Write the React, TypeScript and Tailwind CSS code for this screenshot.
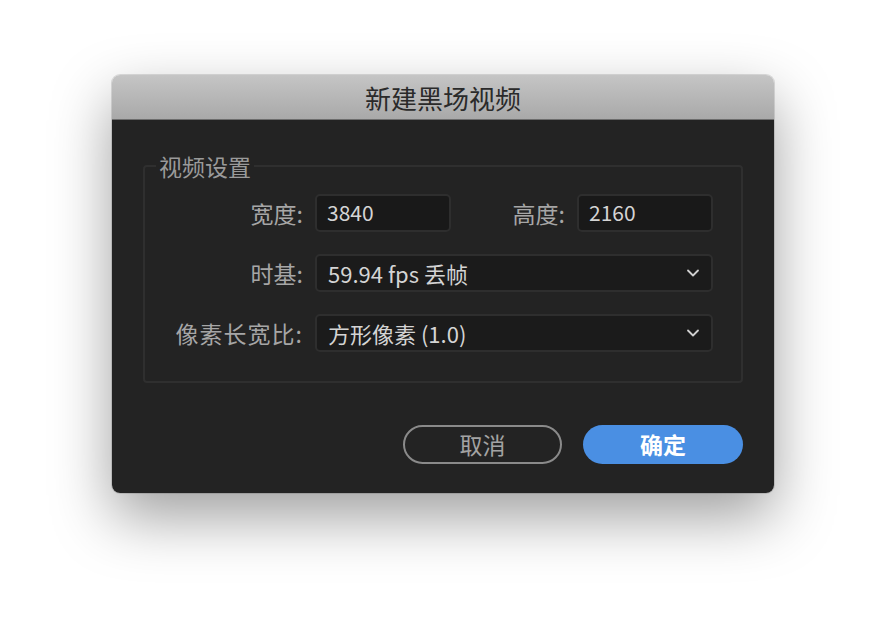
import { ChevronDown } from 'lucide-react';

const font = { fontFamily: '"Noto Sans CJK SC", "Noto Sans", sans-serif' };

function Field({ value, className = '' }: { value: string; className?: string }) {
  return (
    <div className={`flex h-[38px] items-center rounded-[5px] border-2 border-[#2e2e2e] bg-[#191919] pl-[10px] text-[21px] text-[#d4d4d4] ${className}`}>
      {value}
    </div>
  );
}

function Select({ value }: { value: string }) {
  return (
    <div className="flex h-[38px] flex-1 items-center justify-between rounded-[5px] border-2 border-[#2e2e2e] bg-[#1b1b1b] pl-[11px] pr-[8px] text-[22px] text-[#d4d4d4]">
      <span>{value}</span>
      <ChevronDown size={20} strokeWidth={2.2} className="text-[#cfcfcf]" />
    </div>
  );
}

function Label({ children, className = '' }: { children: string; className?: string }) {
  return <span className={`text-right text-[23px] text-[#a6a6a6] ${className}`}>{children}</span>;
}

export default function App() {
  return (
    <div className="h-[642px] w-[886px] bg-white pl-[112px] pt-[75px]" style={font}>
      <div className="flex w-[662px] flex-col overflow-hidden rounded-[8px] shadow-[0_24px_60px_rgba(0,0,0,0.38),0_0_0_1px_rgba(0,0,0,0.12)]">
        {/* title bar */}
        <div className="flex h-[45px] items-center justify-center border-b border-[#6d6d6d] bg-gradient-to-b from-[#c5c5c5] to-[#a9a9a9]">
          <span className="text-[26px] text-[#2a2a2a]">新建黑场视频</span>
        </div>

        <div className="flex h-[373px] flex-col bg-[#232323] px-[31px] pt-[31px]">
          <fieldset className="rounded-[4px] border-2 border-[#2f2f2f] pb-[29px] pr-[28px]">
            <legend className="ml-[11px] px-[3px] text-[23px] leading-[30px] text-[#9a9a9a]">视频设置</legend>
            <div className="mt-[13px] grid grid-cols-[158px_1fr] items-center gap-x-[12px] gap-y-[22px]">
              <Label>宽度:</Label>
              <div className="flex items-center gap-[12px]">
                <Field value="3840" className="w-[136px]" />
                <span className="flex-1 text-right text-[23px] text-[#a6a6a6]">高度:</span>
                <Field value="2160" className="w-[136px]" />
              </div>
              <Label>时基:</Label>
              <Select value="59.94 fps 丢帧" />
              <Label className="tracking-[1px]">像素长宽比:</Label>
              <Select value="方形像素 (1.0)" />
            </div>
          </fieldset>

          <div className="mt-[42px] flex justify-end gap-[21px]">
            <button className="flex h-[39px] w-[159px] items-center justify-center rounded-full border-2 border-[#8a8a8a] text-[23px] text-[#a3a3a3]">
              取消
            </button>
            <button className="flex h-[39px] w-[160px] items-center justify-center rounded-full bg-[#4a8fe3] text-[23px] font-bold text-white">
              确定
            </button>
          </div>
        </div>
      </div>
    </div>
  );
}
